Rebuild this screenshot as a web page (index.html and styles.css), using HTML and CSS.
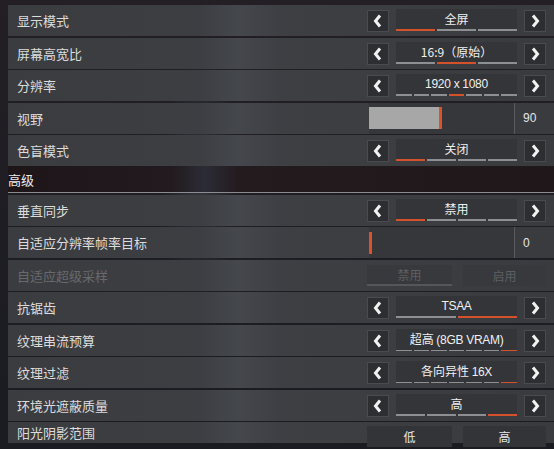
FILE: index.html
```html
<!DOCTYPE html>
<html>
<head>
    <title>视频设置</title>
    <link rel="stylesheet" href="styles.css">
</head>
<body>
    <div class="settings">
        <div class="row">
            <span class="label">显示模式</span>
            <div class="picker">
                <button class="arrow"><svg viewBox="0 0 10 14"><polyline points="7,1.5 2.5,7 7,12.5"/></svg></button>
                <div class="value">
                    <span>全屏</span>
                    <div class="segments"><i class="on"></i><i></i><i></i></div>
                </div>
                <button class="arrow"><svg viewBox="0 0 10 14"><polyline points="3,1.5 7.5,7 3,12.5"/></svg></button>
            </div>
        </div>
        <div class="row">
            <span class="label">屏幕高宽比</span>
            <div class="picker">
                <button class="arrow"><svg viewBox="0 0 10 14"><polyline points="7,1.5 2.5,7 7,12.5"/></svg></button>
                <div class="value">
                    <span>16:9（原始）</span>
                    <div class="segments"><i></i><i class="on"></i><i></i></div>
                </div>
                <button class="arrow"><svg viewBox="0 0 10 14"><polyline points="3,1.5 7.5,7 3,12.5"/></svg></button>
            </div>
        </div>
        <div class="row">
            <span class="label">分辨率</span>
            <div class="picker">
                <button class="arrow"><svg viewBox="0 0 10 14"><polyline points="7,1.5 2.5,7 7,12.5"/></svg></button>
                <div class="value">
                    <span class="latin">1920 x 1080</span>
                    <div class="segments"><i></i><i></i><i></i><i class="on"></i><i></i><i></i><i></i></div>
                </div>
                <button class="arrow"><svg viewBox="0 0 10 14"><polyline points="3,1.5 7.5,7 3,12.5"/></svg></button>
            </div>
        </div>
        <div class="row">
            <span class="label">视野</span>
            <div class="slider">
                <div class="track"><div class="fill" style="width: 73px"></div></div>
                <span class="num">90</span>
            </div>
        </div>
        <div class="row">
            <span class="label">色盲模式</span>
            <div class="picker">
                <button class="arrow"><svg viewBox="0 0 10 14"><polyline points="7,1.5 2.5,7 7,12.5"/></svg></button>
                <div class="value">
                    <span>关闭</span>
                    <div class="segments"><i class="on"></i><i></i><i></i><i></i></div>
                </div>
                <button class="arrow"><svg viewBox="0 0 10 14"><polyline points="3,1.5 7.5,7 3,12.5"/></svg></button>
            </div>
        </div>

        <div class="section">高级</div>

        <div class="row">
            <span class="label">垂直同步</span>
            <div class="picker">
                <button class="arrow"><svg viewBox="0 0 10 14"><polyline points="7,1.5 2.5,7 7,12.5"/></svg></button>
                <div class="value">
                    <span>禁用</span>
                    <div class="segments"><i class="on"></i><i></i><i></i><i></i></div>
                </div>
                <button class="arrow"><svg viewBox="0 0 10 14"><polyline points="3,1.5 7.5,7 3,12.5"/></svg></button>
            </div>
        </div>
        <div class="row">
            <span class="label">自适应分辨率帧率目标</span>
            <div class="slider">
                <div class="track"><div class="fill" style="width: 0px"></div></div>
                <span class="num">0</span>
            </div>
        </div>
        <div class="row disabled">
            <span class="label">自适应超级采样</span>
            <div class="toggle">
                <button class="opt picked">禁用</button>
                <button class="opt">启用</button>
            </div>
        </div>
        <div class="row">
            <span class="label">抗锯齿</span>
            <div class="picker">
                <button class="arrow"><svg viewBox="0 0 10 14"><polyline points="7,1.5 2.5,7 7,12.5"/></svg></button>
                <div class="value">
                    <span class="latin">TSAA</span>
                    <div class="segments"><i></i><i class="on"></i></div>
                </div>
                <button class="arrow"><svg viewBox="0 0 10 14"><polyline points="3,1.5 7.5,7 3,12.5"/></svg></button>
            </div>
        </div>
        <div class="row">
            <span class="label">纹理串流预算</span>
            <div class="picker">
                <button class="arrow"><svg viewBox="0 0 10 14"><polyline points="7,1.5 2.5,7 7,12.5"/></svg></button>
                <div class="value">
                    <span>超高 <span class="latin">(8GB VRAM)</span></span>
                    <div class="segments"><i></i><i></i><i></i><i></i><i></i><i></i><i class="on"></i></div>
                </div>
                <button class="arrow"><svg viewBox="0 0 10 14"><polyline points="3,1.5 7.5,7 3,12.5"/></svg></button>
            </div>
        </div>
        <div class="row">
            <span class="label">纹理过滤</span>
            <div class="picker">
                <button class="arrow"><svg viewBox="0 0 10 14"><polyline points="7,1.5 2.5,7 7,12.5"/></svg></button>
                <div class="value">
                    <span>各向异性 <span class="latin">16X</span></span>
                    <div class="segments"><i></i><i></i><i></i><i></i><i></i><i></i><i class="on"></i></div>
                </div>
                <button class="arrow"><svg viewBox="0 0 10 14"><polyline points="3,1.5 7.5,7 3,12.5"/></svg></button>
            </div>
        </div>
        <div class="row">
            <span class="label">环境光遮蔽质量</span>
            <div class="picker">
                <button class="arrow"><svg viewBox="0 0 10 14"><polyline points="7,1.5 2.5,7 7,12.5"/></svg></button>
                <div class="value">
                    <span>高</span>
                    <div class="segments"><i></i><i></i><i></i><i class="on"></i></div>
                </div>
                <button class="arrow"><svg viewBox="0 0 10 14"><polyline points="3,1.5 7.5,7 3,12.5"/></svg></button>
            </div>
        </div>
        <div class="row last">
            <span class="label">阳光阴影范围</span>
            <div class="toggle">
                <button class="opt">低</button>
                <button class="opt">高</button>
            </div>
        </div>
    </div>
</body>
</html>
```

FILE: styles.css
```css
body {
    margin: 0;
    width: 554px;
    height: 449px;
    overflow: hidden;
    font-family: "Noto Sans CJK SC", "Noto Sans", sans-serif;
    color: #dcdcdc;
    background:
        radial-gradient(ellipse 40px 120px at 200px 180px, rgba(90,100,120,0.35), transparent),
        linear-gradient(to bottom, #231f24 0, #1e1d23 50%, #1a1c21 100%);
}
.settings {
    padding: 5px 0 0 8px;
    display: flex;
    flex-direction: column;
    gap: 1.5px;
}
.row {
    height: 31px;
    display: flex;
    align-items: center;
    justify-content: space-between;
    padding: 0 8px 0 9px;
    background: linear-gradient(to right, #3b3c40 0, #3d3e42 35%, #44474d 42%, #3e3f43 50%, #3a3b3f 100%);
}
.label {
    font-size: 13px;
}
.latin {
    font-family: "Liberation Sans", Arial, sans-serif;
    font-size: 12px;
    letter-spacing: -0.3px;
}
.section {
    height: 25px;
    margin: -1.5px 0 0;
    padding-top: 1px;
    line-height: 25px;
    font-size: 13px;
    color: #ececec;
    background: linear-gradient(to right, #1e1519 0, #221a1e 30%, #2c2c36 36%, #241b1f 42%, #1f171a 100%);
    border-bottom: 1px solid #8c8c8e;
}
.picker {
    display: flex;
    align-items: flex-start;
    gap: 7px;
    height: 31px;
    padding-top: 9px;
    box-sizing: border-box;
}
.arrow {
    width: 22px;
    height: 22px;
    margin-top: -4px;
    padding: 0;
    border: 1px solid #4a4b4f;
    background: #2d2e31;
    display: flex;
    align-items: center;
    justify-content: center;
}
.arrow svg {
    width: 10px;
    height: 14px;
}
.arrow polyline {
    fill: none;
    stroke: #f2f2f2;
    stroke-width: 3;
}
.value {
    width: 121px;
    height: 22px;
    margin-top: -5px;
    background: #343538;
    display: flex;
    flex-direction: column;
    align-items: center;
    font-size: 12px;
    color: #f0f0f0;
}
.value > span {
    flex: 1;
    line-height: 20px;
}
.segments {
    display: flex;
    gap: 2px;
    width: 100%;
    height: 2px;
}
.segments i {
    flex: 1;
    background: #8e8f92;
}
.segments i.on {
    background: #d4512b;
}
.slider {
    display: flex;
    align-items: center;
    height: 31px;
    width: 185px;
    margin-right: -8px;
}
.track {
    width: 146px;
    height: 31px;
    padding: 4.5px 0;
    box-sizing: border-box;
    background: #36373a;
    border-right: 1px solid #5a5b5e;
}
.fill {
    height: 22px;
    min-width: 3px;
    box-sizing: border-box;
    background: #a7a7a7;
    border-right: 3px solid #dd5327;
}
.num {
    flex: 1;
    padding-left: 8px;
    font-family: "Liberation Sans", Arial, sans-serif;
    font-size: 12px;
    color: #e6e6e6;
}
.toggle {
    display: flex;
    gap: 11px;
}
.opt {
    width: 85px;
    height: 21px;
    padding: 0;
    border: none;
    background: #333437;
    font-family: inherit;
    font-size: 12px;
    color: #e8e8e8;
}
.opt + .opt {
    width: 83px;
}
.disabled .label {
    color: #68696c;
}
.disabled .opt {
    color: #5e5f62;
    background: #38393c;
}
.disabled .opt.picked {
    border-bottom: 2px solid #55565a;
}
.last {
    height: 21px;
    align-items: flex-start;
}
.last .label {
    line-height: 21px;
}
.last .toggle {
    padding-top: 4px;
}
```
